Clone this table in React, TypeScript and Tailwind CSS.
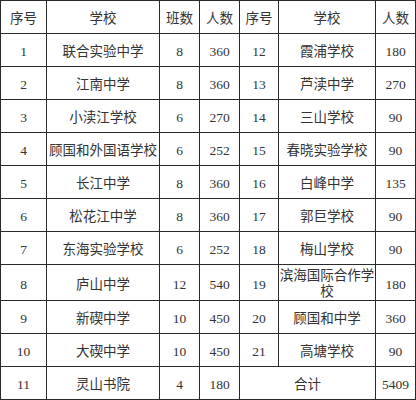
import { Fragment } from 'react'

const rows: [string, string, string, string, string, string, string][] = [
  ['1', '联合实验中学', '8', '360', '12', '霞浦学校', '180'],
  ['2', '江南中学', '8', '360', '13', '芦渎中学', '270'],
  ['3', '小渎江学校', '6', '270', '14', '三山学校', '90'],
  ['4', '顾国和外国语学校', '6', '252', '15', '春晓实验学校', '90'],
  ['5', '长江中学', '8', '360', '16', '白峰中学', '135'],
  ['6', '松花江中学', '8', '360', '17', '郭巨学校', '90'],
  ['7', '东海实验学校', '6', '252', '18', '梅山学校', '90'],
  ['8', '庐山中学', '12', '540', '19', '滨海国际合作学|校', '180'],
  ['9', '新碶中学', '10', '450', '20', '顾国和中学', '360'],
  ['10', '大碶中学', '10', '450', '21', '高塘学校', '90'],
]

const cell = 'border border-[#2a2a2a] text-center align-middle p-0 pt-[3px] whitespace-nowrap'

// the long school name wraps onto a second line in the source sheet
function Name({ text }: { text: string }) {
  const parts = text.split('|')
  return (
    <>
      {parts.map((p, i) => (
        <Fragment key={i}>
          {i > 0 && <br />}
          {p}
        </Fragment>
      ))}
    </>
  )
}

export default function App() {
  return (
    <div className="w-[416px] h-[400px] bg-white text-[#333] overflow-hidden">
      <table
        className="table-fixed border-collapse w-[415px] text-[13.5px] leading-[17px]"
        style={{ fontFamily: '"Liberation Serif", "Noto Sans CJK SC", serif' }}
      >
        <colgroup>
          <col className="w-[46px]" />
          <col className="w-[113px]" />
          <col className="w-[40px]" />
          <col className="w-[40px]" />
          <col className="w-[39px]" />
          <col className="w-[97px]" />
          <col className="w-[40px]" />
        </colgroup>
        <tbody>
          <tr className="h-[33px]">
            <td className={cell}>序号</td>
            <td className={cell}>学校</td>
            <td className={cell}>班数</td>
            <td className={cell}>人数</td>
            <td className={cell}>序号</td>
            <td className={cell}>学校</td>
            <td className={cell}>人数</td>
          </tr>
          {rows.map((r) => (
            <tr key={r[0]} className="h-[33px]">
              <td className={cell}>{r[0]}</td>
              <td className={cell}>{r[1]}</td>
              <td className={cell}>{r[2]}</td>
              <td className={cell}>{r[3]}</td>
              <td className={cell}>{r[4]}</td>
              <td className={cell + ' leading-[16px] pt-0'}>
                <Name text={r[5]} />
              </td>
              <td className={cell}>{r[6]}</td>
            </tr>
          ))}
          <tr className="h-[33px]">
            <td className={cell}>11</td>
            <td className={cell}>灵山书院</td>
            <td className={cell}>4</td>
            <td className={cell}>180</td>
            <td className={cell} colSpan={2}>合计</td>
            <td className={cell}>5409</td>
          </tr>
        </tbody>
      </table>
    </div>
  )
}
